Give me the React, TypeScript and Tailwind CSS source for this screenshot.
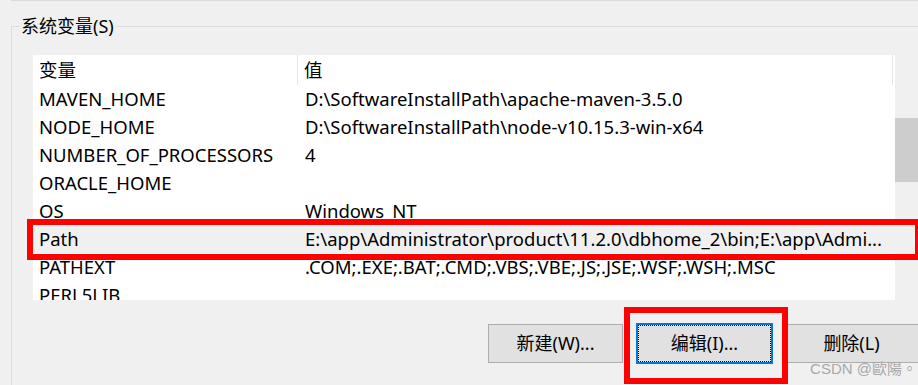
import React from "react";

const rows: { name: string; value: string; selected?: boolean }[] = [
  { name: "MAVEN_HOME", value: "D:\\SoftwareInstallPath\\apache-maven-3.5.0" },
  { name: "NODE_HOME", value: "D:\\SoftwareInstallPath\\node-v10.15.3-win-x64" },
  { name: "NUMBER_OF_PROCESSORS", value: "4" },
  { name: "ORACLE_HOME", value: "" },
  { name: "OS", value: "Windows_NT" },
  {
    name: "Path",
    value: "E:\\app\\Administrator\\product\\11.2.0\\dbhome_2\\bin;E:\\app\\Admi...",
    selected: true,
  },
  { name: "PATHEXT", value: ".COM;.EXE;.BAT;.CMD;.VBS;.VBE;.JS;.JSE;.WSF;.WSH;.MSC" },
  { name: "PERL5LIB", value: "" },
];

export default function App() {
  return (
    <div className="relative w-[918px] h-[385px] overflow-hidden bg-[#f0f0f0] text-black text-[18.5px] font-['Segoe_UI','Noto_Sans','Noto_Sans_CJK_SC',sans-serif]">
      <div className="ml-[11px] h-px bg-[#dadada]" />
      <fieldset className="ml-[11px] mt-[13px] h-[400px] border-l border-t border-[#dcdcdc]">
        <legend className="ml-[7px] px-[2px] leading-[24px] text-[18px]">系统变量(S)</legend>
        <div className="ml-[21px] mt-[17px] flex">
          <div className="w-[862px] h-[245px] overflow-hidden bg-white">
            <div className="flex h-[30px] items-center w-[860px]">
              <div className="w-[265px] pl-[6px] h-full flex items-center border-r border-[#e5e5e5]">变量</div>
              <div className="flex-1 pl-[6px] h-full flex items-center border-r border-[#e5e5e5]">值</div>
            </div>
            {rows.map((r) => (
              <div
                key={r.name}
                className={
                  "flex h-[28px] items-center whitespace-nowrap " +
                  (r.selected ? "bg-[#f0f0f0]" : "")
                }
              >
                <div className="w-[266px] pl-[6px]">{r.name}</div>
                <div className="flex-1 pl-[6px]">{r.value}</div>
              </div>
            ))}
          </div>
          <div className="w-[25px] pt-[63px]">
            <div className="h-[64px] w-full bg-[#cdcdcd]" />
          </div>
        </div>
        <div className="mt-[23px] ml-[476px] flex items-center h-[41px] text-[18px]">
          <button className="w-[135px] h-[39px] bg-[#e1e1e1] border border-[#adadad]">新建(W)...</button>
          <button className="ml-[13px] w-[137px] h-[41px] bg-[#e1e1e1] border-2 border-[#0078d7] outline-1 outline-dotted outline-black outline-offset-[-3px]">
            编辑(I)...
          </button>
          <button className="ml-[10px] w-[137px] h-[39px] bg-[#e1e1e1] border border-[#adadad]">删除(L)</button>
        </div>
      </fieldset>

      <div className="absolute left-[27px] top-[219px] w-[894px] h-[41px] border-[6px] border-[#ff0000]" />
      <div className="absolute left-[624px] top-[307px] w-[164px] h-[77px] border-[6px] border-[#ff0000]" />
      <div className="absolute right-[1px] bottom-[9px] text-[15px] leading-none text-[#a8a8a8] font-['Liberation_Sans','Noto_Sans_CJK_TC',sans-serif]">
        CSDN @歐陽。
      </div>
    </div>
  );
}
